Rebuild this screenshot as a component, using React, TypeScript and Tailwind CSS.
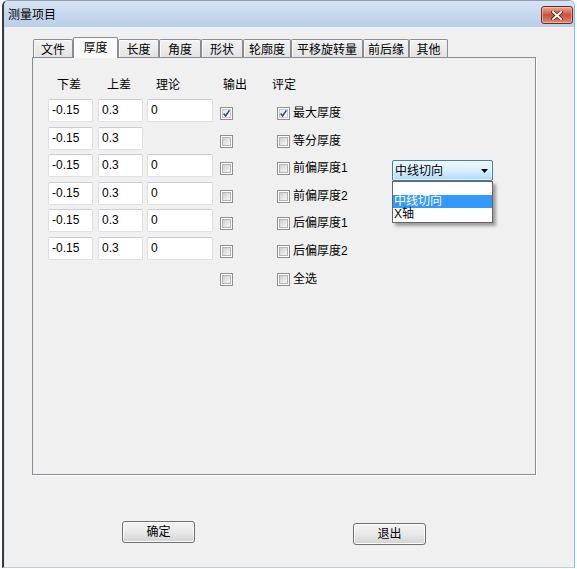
import React from 'react';

const FONT = "font-['Liberation_Sans','Noto_Sans_CJK_SC',sans-serif]";

const TABS: { label: string; w: string }[] = [
  { label: '文件', w: 'w-[40px]' },
  { label: '厚度', w: 'w-[45px]' },
  { label: '长度', w: 'w-[41px]' },
  { label: '角度', w: 'w-[42px]' },
  { label: '形状', w: 'w-[42px]' },
  { label: '轮廓度', w: 'w-[48px]' },
  { label: '平移旋转量', w: 'w-[72px]' },
  { label: '前后缘', w: 'w-[46px]' },
  { label: '其他', w: 'w-[39px]' },
];

type Row = { lo: string; hi: string; th: string | null; out: boolean; label: string; eval: boolean };

const ROWS: Row[] = [
  { lo: '-0.15', hi: '0.3', th: '0', out: true, label: '最大厚度', eval: true },
  { lo: '-0.15', hi: '0.3', th: null, out: false, label: '等分厚度', eval: false },
  { lo: '-0.15', hi: '0.3', th: '0', out: false, label: '前偏厚度1', eval: false },
  { lo: '-0.15', hi: '0.3', th: '0', out: false, label: '前偏厚度2', eval: false },
  { lo: '-0.15', hi: '0.3', th: '0', out: false, label: '后偏厚度1', eval: false },
  { lo: '-0.15', hi: '0.3', th: '0', out: false, label: '后偏厚度2', eval: false },
];

function Check({ checked = false }: { checked?: boolean }) {
  return (
    <span className="flex w-[13px] h-[13px] shrink-0 border border-[#8e8f8f] bg-white p-[1px]">
      <span
        className={
          checked
            ? 'flex flex-1 items-center justify-center border border-[#c4c8ce] bg-linear-to-br from-[#e6e9ee] to-[#ffffff]'
            : 'flex flex-1 border border-[#b4b4b4] bg-linear-to-br from-[#cfcfcf] to-[#f7f7f7]'
        }
      >
        {checked && (
          <svg width="7" height="7" viewBox="0 0 7 7" className="overflow-visible">
            <path d="M0.6 3.6 L2.6 6 L6.4 0.4" fill="none" stroke="#2d4c96" strokeWidth="1.6" />
          </svg>
        )}
      </span>
    </span>
  );
}

function Field({ value, w }: { value: string; w: string }) {
  return (
    <div
      className={`${w} h-[23px] shrink-0 bg-white border border-[#dcdfe4] border-t-[#c9ccd2] rounded-[2px] pl-[3px] pt-[3px] text-[12px] leading-[14px] text-black`}
    >
      {value}
    </div>
  );
}

function Combo() {
  return (
    <div className="relative mt-[6px]">
      <div className="w-[101px] h-[21px] rounded-[2px] border border-[#3c7fb1] bg-linear-to-b from-[#eaf6fd] via-[#d9f0fc] to-[#a9dbf6] shadow-[inset_0_0_0_1px_rgba(255,255,255,0.6)] flex items-center pl-[2px] pr-[4px]">
        <span className="flex-1 text-[12px] leading-[14px] text-black">中线切向</span>
        <svg width="7" height="4" viewBox="0 0 7 4">
          <path d="M0 0 H7 L3.5 4 Z" fill="#000" />
        </svg>
      </div>
      <div className="absolute left-0 top-[21px] z-10 w-[101px] border border-[#646464] bg-white pt-[13px] pb-[1px] shadow-[3px_3px_3px_rgba(0,0,0,0.35)] text-[12px] leading-[13px]">
        <div className="h-[13px] bg-[#3399ff] text-white pl-[1px]">中线切向</div>
        <div className="h-[13px] text-black pl-[1px]">X轴</div>
      </div>
    </div>
  );
}

function Button({ label, extra }: { label: string; extra: string }) {
  return (
    <div
      className={`${extra} w-[73px] h-[22px] rounded-[3px] border border-[#707070] bg-linear-to-b from-[#f4f4f4] via-[#e9e9e9] to-[#d3d3d3] shadow-[inset_0_0_0_1px_#fbfbfb] flex items-center justify-center text-[12px] leading-[14px] text-black`}
    >
      {label}
    </div>
  );
}

export default function App() {
  return (
    <div className={`${FONT} w-[577px] h-[569px] bg-white px-[2px] pb-[1px] flex flex-col`}>
      <div className="flex-1 flex flex-col rounded-t-[6px] overflow-hidden border-t border-t-[#8a9ab0] border-l-2 border-l-[#3b3b3b] border-r border-r-[#6cc8e8] border-b border-b-[#b0d0ec]">
        {/* title bar */}
        <div className="h-[26px] shrink-0 flex items-center pt-[2px] pl-[4px] pr-[1px] bg-linear-to-b from-[#d8e4f3] via-[#c6d7ed] to-[#bccfe9]">
          <span className="flex-1 text-[12px] leading-[14px] text-black">测量项目</span>
          <div className="w-[32px] h-[18px] rounded-[3px] border border-[#6a2a20] bg-linear-to-b from-[#e6aa9b] via-[#cc4f36] to-[#d98a74] shadow-[inset_0_0_0_1px_rgba(255,220,210,0.5)] flex items-center justify-center">
            <svg width="12" height="9" viewBox="0 0 12 9">
              <path d="M2 1 L10 8 M10 1 L2 8" stroke="#5a2018" strokeWidth="3.6" strokeLinecap="square" />
              <path d="M2 1 L10 8 M10 1 L2 8" stroke="#ffffff" strokeWidth="2" strokeLinecap="square" />
            </svg>
          </div>
        </div>

        {/* client */}
        <div className="flex-1 flex flex-col bg-[#f0f0f0] border-l border-l-[#d6e4f4]">
          <div className="ml-[28px] mt-[10px] h-[20px] flex items-end">
            {TABS.map((t, i) =>
              i === 1 ? (
                <div
                  key={t.label}
                  className={`${t.w} h-[21px] -mb-px relative z-10 border border-b-0 border-[#898c95] rounded-t-[2px] bg-[#fbfbfb] flex justify-center pt-[3px] text-[12px] leading-[14px] text-black`}
                >
                  {t.label}
                </div>
              ) : (
                <div
                  key={t.label}
                  className={`${t.w} h-[18px] border border-b-0 border-[#898c95] rounded-t-[2px] bg-linear-to-b from-[#f3f3f3] to-[#e3e3e3] shadow-[inset_1px_1px_0_#fafafa] flex justify-center pt-[3px] text-[12px] leading-[14px] text-black`}
                >
                  {t.label}
                </div>
              ),
            )}
          </div>

          <div className="ml-[27px] w-[504px] h-[418px] border border-[#898c95] shadow-[1px_1px_0_#ffffff] pl-[15px] pt-[19px] text-[12px] leading-[16px] text-black">
            <div className="flex h-[16px]">
              <span className="w-[50px] pl-[9px]">下差</span>
              <span className="w-[49px] pl-[9px]">上差</span>
              <span className="w-[66px] pl-[9px]">理论</span>
              <span className="w-[58px] pl-[10px]">输出</span>
              <span className="pl-[1px]">评定</span>
            </div>

            <div className="mt-[6px] flex flex-col">
              {ROWS.map((r, i) => (
                <div key={r.label} className="flex items-start h-[27.6px]">
                  <Field value={r.lo} w="w-[45px]" />
                  <div className="ml-[5px]">
                    <Field value={r.hi} w="w-[45px]" />
                  </div>
                  <div className="ml-[4px] w-[66px]">{r.th !== null && <Field value={r.th} w="w-[66px]" />}</div>
                  <div className="ml-[7px] pt-[8px]">
                    <Check checked={r.out} />
                  </div>
                  <div className="ml-[44px] w-[115px] pt-[8px] flex items-center">
                    <Check checked={r.eval} />
                    <span className="ml-[3px] leading-[13px]">{r.label}</span>
                  </div>
                  {i === 2 && <Combo />}
                </div>
              ))}
              <div className="flex items-start h-[27.6px]">
                <div className="ml-[172px] pt-[8px]">
                  <Check />
                </div>
                <div className="ml-[44px] pt-[8px] flex items-center">
                  <Check />
                  <span className="ml-[3px] leading-[13px]">全选</span>
                </div>
              </div>
            </div>
          </div>

          <div className="flex items-start ml-[117px] mt-[46px]">
            <Button label="确定" extra="" />
            <Button label="退出" extra="ml-[158px] mt-[2px]" />
          </div>
        </div>
      </div>
    </div>
  );
}
